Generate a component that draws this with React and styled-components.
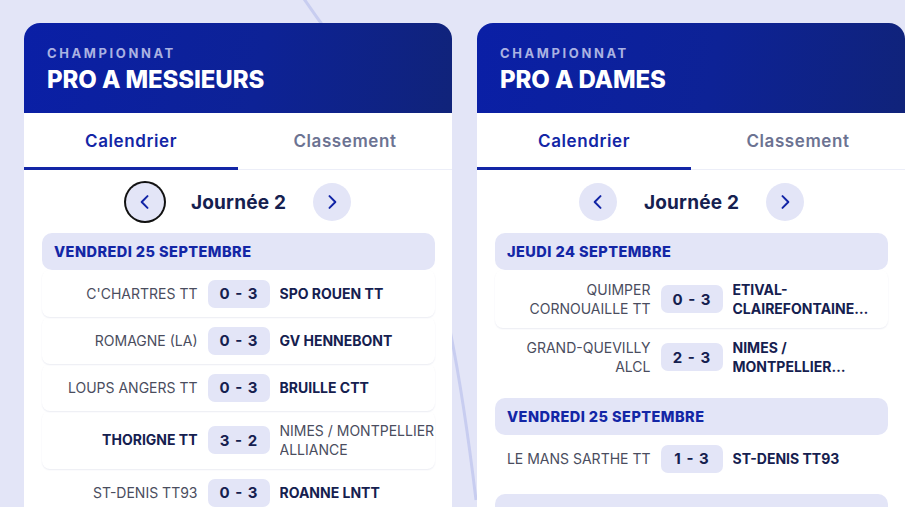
import styled, { createGlobalStyle } from "styled-components";

const GlobalStyle = createGlobalStyle`
  html, body {
    margin: 0;
    padding: 0;
    background: #e3e5f7;
    font-family: "Inter", "Noto Sans", sans-serif;
  }
  * { box-sizing: border-box; }
`;

const Page = styled.div`
  position: relative;
  width: 905px;
  height: 507px;
  overflow: hidden;
  background: #e3e5f7;
`;

const Decor = styled.svg`
  position: absolute;
  inset: 0;
  pointer-events: none;
`;

const Cards = styled.div`
  position: relative;
  display: flex;
  gap: 25px;
  padding: 23px 0 0 24px;
`;

const Card = styled.section`
  flex: 0 0 428px;
  background: #fff;
  border-radius: 16px 16px 0 0;
  overflow: hidden;
  height: 484px;
`;

const Header = styled.header`
  height: 90px;
  padding: 22px 23px 0;
  background: linear-gradient(100deg, #0a1fa6 0%, #0d2296 55%, #10237a 100%);
`;

const Kicker = styled.div`
  font-size: 13px;
  font-weight: 700;
  letter-spacing: 2.6px;
  color: #aab2e2;
  line-height: 16px;
`;

const Title = styled.h2`
  margin: 4px 0 0;
  font-size: 24px;
  font-weight: 800;
  color: #fff;
  line-height: 30px;
  letter-spacing: -0.1px;
`;

const Tabs = styled.nav`
  display: flex;
  height: 57px;
  border-bottom: 1px solid #eceef8;
`;

const Tab = styled.div`
  flex: 1;
  display: flex;
  align-items: center;
  justify-content: center;
  font-size: 17px;
  font-weight: 600;
  letter-spacing: 0.6px;
  color: ${p => (p.$active ? "#1326a6" : "#6c7392")};
  border-bottom: 3px solid ${p => (p.$active ? "#1326a6" : "transparent")};
  margin-bottom: -1px;
  padding-top: 1px;
`;

const Body = styled.div`
  padding: 12px 17px 0 18px;
`;

const DayNav = styled.div`
  display: flex;
  align-items: center;
  justify-content: center;
  gap: 27px;
  height: 40px;
  margin-bottom: 11px;
`;

const RoundButton = styled.button`
  width: 38px;
  height: 38px;
  border-radius: 50%;
  border: none;
  background: #e3e5f7;
  color: #1326a6;
  display: flex;
  align-items: center;
  justify-content: center;
  padding: 0;
  box-shadow: ${p => (p.$focused ? "0 0 0 2px #111" : "none")};
`;

const DayLabel = styled.div`
  font-size: 19px;
  font-weight: 700;
  color: #15204f;
  letter-spacing: 0.2px;
`;

const Group = styled.div`
  margin-bottom: 12px;
`;

const DateBar = styled.div`
  height: 37px;
  display: flex;
  align-items: center;
  padding-left: 12px;
  border-radius: 10px;
  background: #e3e5f7;
  color: #1326a6;
  font-size: 14.5px;
  font-weight: 800;
  letter-spacing: 0.45px;
`;

const Match = styled.div`
  display: grid;
  grid-template-columns: 1fr 62px 1fr;
  align-items: center;
  column-gap: 10px;
  padding: 9.5px 0;
  border-radius: 8px;
  box-shadow: 0 1px 1.5px rgba(30, 40, 120, 0.09);
  &:last-child {
    box-shadow: none;
  }
`;

const Team = styled.div`
  font-size: 14px;
  line-height: 19.5px;
  text-transform: uppercase;
  text-align: ${p => (p.$home ? "right" : "left")};
  color: ${p => (p.$winner ? "#15204f" : "#4a4d5e")};
  font-weight: ${p => (p.$winner ? 700 : 400)};
  display: -webkit-box;
  -webkit-line-clamp: 2;
  -webkit-box-orient: vertical;
  overflow: hidden;
`;

const Score = styled.div`
  height: 28px;
  border-radius: 7px;
  background: #e3e5f7;
  display: flex;
  align-items: center;
  justify-content: center;
  font-size: 15px;
  font-weight: 700;
  color: #15204f;
  word-spacing: 2px;
`;

const Chevron = ({ dir }) => (
  <svg width="20" height="20" viewBox="0 0 24 24" fill="none" stroke="currentColor" strokeWidth="2.4" strokeLinecap="round" strokeLinejoin="round">
    {dir === "left" ? <path d="M15 5l-7 7 7 7" /> : <path d="M9 5l7 7-7 7" />}
  </svg>
);

const data = [
  {
    kicker: "CHAMPIONNAT",
    title: "PRO A MESSIEURS",
    focused: true,
    groups: [
      {
        date: "VENDREDI 25 SEPTEMBRE",
        matches: [
          ["C'CHARTRES TT", "0 - 3", "SPO ROUEN TT", "away"],
          ["ROMAGNE (LA)", "0 - 3", "GV HENNEBONT", "away"],
          ["LOUPS ANGERS TT", "0 - 3", "BRUILLE CTT", "away"],
          ["THORIGNE TT", "3 - 2", "NIMES / MONTPELLIER ALLIANCE", "home"],
          ["ST-DENIS TT93", "0 - 3", "ROANNE LNTT", "away"],
        ],
      },
    ],
  },
  {
    kicker: "CHAMPIONNAT",
    title: "PRO A DAMES",
    focused: false,
    groups: [
      {
        date: "JEUDI 24 SEPTEMBRE",
        matches: [
          ["QUIMPER CORNOUAILLE TT", "0 - 3", "ETIVAL-CLAIREFONTAINE ASRTT", "away"],
          ["GRAND-QUEVILLY ALCL", "2 - 3", "NIMES / MONTPELLIER ALLIANCE", "away"],
        ],
      },
      {
        date: "VENDREDI 25 SEPTEMBRE",
        matches: [["LE MANS SARTHE TT", "1 - 3", "ST-DENIS TT93", "away"]],
      },
      {
        date: "",
        matches: [],
      },
    ],
  },
];

function Championship({ kicker, title, focused, groups }) {
  return (
    <Card>
      <Header>
        <Kicker>{kicker}</Kicker>
        <Title>{title}</Title>
      </Header>
      <Tabs>
        <Tab $active>Calendrier</Tab>
        <Tab>Classement</Tab>
      </Tabs>
      <Body>
        <DayNav>
          <RoundButton $focused={focused}><Chevron dir="left" /></RoundButton>
          <DayLabel>Journée 2</DayLabel>
          <RoundButton><Chevron dir="right" /></RoundButton>
        </DayNav>
        {groups.map((g, i) => (
          <Group key={i}>
            <DateBar>{g.date}</DateBar>
            {g.matches.map(([home, score, away, winner]) => (
              <Match key={home}>
                <Team $home $winner={winner === "home"}>{home}</Team>
                <Score>{score}</Score>
                <Team $winner={winner === "away"}>{away}</Team>
              </Match>
            ))}
          </Group>
        ))}
      </Body>
    </Card>
  );
}

export default function App() {
  return (
    <Page>
      <GlobalStyle />
      <Decor width="905" height="507" viewBox="0 0 905 507">
        <path d="M298 -10 Q310 8 326 30" stroke="#c8cdf0" strokeWidth="3" fill="none" />
        <path d="M450 330 Q464 400 476 500" stroke="#c8cdf0" strokeWidth="3" fill="none" />
      </Decor>
      <Cards>
        {data.map(c => (
          <Championship key={c.title} {...c} />
        ))}
      </Cards>
    </Page>
  );
}
